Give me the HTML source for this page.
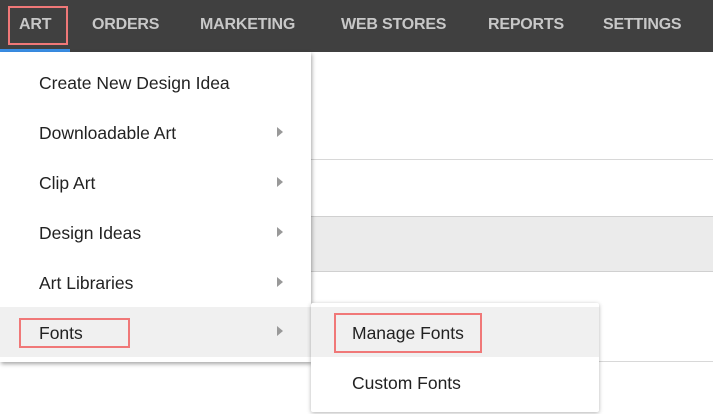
<!DOCTYPE html><html><head><style>
body{margin:0;width:713px;height:414px;overflow:hidden;background:#fff;font-family:"Liberation Sans",sans-serif;position:relative}
.a{position:absolute}
.nav{left:0;top:0;width:713px;height:52px;background:#404040}
.ni{top:16px;color:#c8c8c8;font-weight:bold;font-size:16px;letter-spacing:-0.2px}
.mi{left:39px;font-size:17.5px;color:#222;}
.ar{width:0;height:0;border-top:5px solid transparent;border-bottom:5px solid transparent;border-left:6px solid #999;left:277px}
.rb{border:2px solid #f07878}
</style></head><body>
<div class="a nav"></div>
<div class="a" style="left:0;top:49px;width:70px;height:3px;background:#3a8ee6"></div>
<div class="a rb" style="left:8px;top:6px;width:56px;height:35px"></div>
<div class="a ni" style="left:19px">ART</div>
<div class="a ni" style="left:92px">ORDERS</div>
<div class="a ni" style="left:200px">MARKETING</div>
<div class="a ni" style="left:341px">WEB STORES</div>
<div class="a ni" style="left:488px">REPORTS</div>
<div class="a ni" style="left:603px">SETTINGS</div>
<div class="a" style="left:0;top:159px;width:713px;height:1px;background:#d8d8d8"></div>
<div class="a" style="left:0;top:216px;width:713px;height:54px;background:#ebebeb;border-top:1px solid #d0d0d0;border-bottom:1px solid #d0d0d0"></div>
<div class="a" style="left:0;top:361px;width:713px;height:1px;background:#d8d8d8"></div>
<div class="a" style="left:0;top:52px;width:311px;height:310px;background:#fff;box-shadow:1px 2px 4px rgba(0,0,0,.35)"></div>
<div class="a" style="left:0;top:307px;width:311px;height:50px;background:#f0f0f0"></div>
<div class="a mi" style="top:73px">Create New Design Idea</div>
<div class="a mi" style="top:123px">Downloadable Art</div><div class="a ar" style="top:127px"></div>
<div class="a mi" style="top:173px">Clip Art</div><div class="a ar" style="top:177px"></div>
<div class="a mi" style="top:223px">Design Ideas</div><div class="a ar" style="top:227px"></div>
<div class="a mi" style="top:273px">Art Libraries</div><div class="a ar" style="top:277px"></div>
<div class="a mi" style="top:323px">Fonts</div><div class="a ar" style="top:326px"></div>
<div class="a rb" style="left:19px;top:318px;width:107px;height:26px"></div>
<div class="a" style="left:311px;top:303px;width:288px;height:109px;background:#fff;box-shadow:0 1px 4px rgba(0,0,0,.3);border-radius:2px"></div>
<div class="a" style="left:311px;top:307px;width:288px;height:50px;background:#f0f0f0"></div>
<div class="a mi" style="left:352px;top:323px">Manage Fonts</div>
<div class="a mi" style="left:352px;top:373px">Custom Fonts</div>
<div class="a rb" style="left:334px;top:313px;width:144px;height:36px"></div>
</body></html>
